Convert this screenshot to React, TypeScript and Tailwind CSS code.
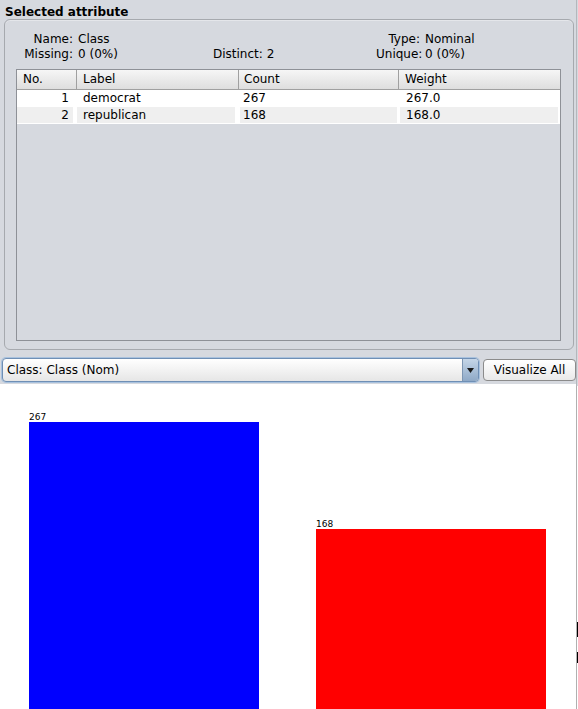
import React from "react";

const ROWS = [
  { no: 1, label: "democrat", count: "267", weight: "267.0" },
  { no: 2, label: "republican", count: "168", weight: "168.0" },
];

const BARS = [
  { value: 267, color: "bg-[#0000ff]" },
  { value: 168, color: "bg-[#ff0000]" },
];

const MAX_H = 289;

export default function App() {
  const max = Math.max(...BARS.map((b) => b.value));

  return (
    <div className="flex h-[709px] w-[578px] overflow-hidden bg-[#d6d9df] font-['DejaVu_Sans',sans-serif] text-[12px] leading-[15px] text-black">
      <div className="flex w-[576px] shrink-0 flex-col overflow-hidden">
        {/* title */}
        <div className="h-[19px] shrink-0 pl-[5px] pt-[5px] text-[12px] font-bold leading-[14px]">
          Selected attribute
        </div>

        {/* panel */}
        <div className="ml-[4px] flex h-[331px] w-[570px] shrink-0 flex-col rounded-[6px] border border-[#a6a9ae] bg-[#d6d9df] shadow-[inset_0_1px_0_#e4e6ea]">
          <div className="flex pt-[12px]">
            <div className="grid w-[190px] grid-cols-[68px_1fr] gap-x-[5px]">
              <span className="text-right">Name:</span>
              <span>Class</span>
              <span className="text-right">Missing:</span>
              <span>0 (0%)</span>
            </div>
            <div className="w-[181px] pt-[15px] pl-[18px]">Distinct: 2</div>
            <div className="grid grid-cols-[44px_1fr] gap-x-[5px]">
              <span className="text-right">Type:</span>
              <span>Nominal</span>
              <span className="text-right">Unique:</span>
              <span>0 (0%)</span>
            </div>
          </div>

          {/* table */}
          <div className="ml-[11px] mt-[7px] flex h-[272px] w-[545px] flex-col border border-[#8e9197] bg-[#d6d9df]">
            <div className="flex h-[20px] border-b border-[#a0a0a0] bg-gradient-to-b from-[#f6f6f6] to-[#dedede]">
              <div className="w-[60px] border-r border-[#a0a0a0] pl-[6px] leading-[19px]">No.</div>
              <div className="w-[162px] border-r border-[#a0a0a0] pl-[6px] leading-[19px]">Label</div>
              <div className="w-[160px] border-r border-[#a0a0a0] pl-[5px] leading-[19px]">Count</div>
              <div className="flex-1 pl-[6px] leading-[19px]">Weight</div>
            </div>
            {ROWS.map((r, i) => (
              <div
                key={r.no}
                className={
                  "flex h-[17px] bg-white leading-[16px] " + (i % 2 === 1 ? "pb-[1px]" : "")
                }
              >
                <div className={"mr-[4px] w-[56px] pr-[4px] text-right " + (i % 2 === 1 ? "bg-[#efefef]" : "")}>
                  {r.no}
                </div>
                <div className={"mr-[5px] w-[158px] pl-[6px] " + (i % 2 === 1 ? "bg-[#efefef]" : "")}>
                  {r.label}
                </div>
                <div className={"mr-[3px] w-[157px] pl-[3px] " + (i % 2 === 1 ? "bg-[#efefef]" : "")}>
                  {r.count}
                </div>
                <div className={"mr-[2px] flex-1 pl-[6px] " + (i % 2 === 1 ? "bg-[#efefef]" : "")}>
                  {r.weight}
                </div>
              </div>
            ))}
          </div>
        </div>

        {/* class selector */}
        <div className="mt-[8px] flex h-[26px] shrink-0 items-start">
          <div className="ml-[2px] flex h-[24px] w-[477px] overflow-hidden rounded-[4px] border border-[#6f8fb5] bg-gradient-to-b from-[#ffffff] to-[#e6e6e6] shadow-[0_0_0_1px_#a9c2de]">
            <div className="flex-1 pl-[4px] text-[12px] leading-[22px]">Class: Class (Nom)</div>
            <div className="flex w-[16px] items-center justify-center border-l border-[#7d96b3] bg-gradient-to-b from-[#c5d6e8] to-[#8fa9c7]">
              <svg width="7" height="5" viewBox="0 0 7 5">
                <path d="M0 0 H7 L3.5 5 Z" fill="#1a1a1a" />
              </svg>
            </div>
          </div>
          <button className="ml-[4px] mt-[1px] h-[22px] w-[93px] rounded-[4px] border border-[#8b8b8b] bg-gradient-to-b from-[#ffffff] to-[#e9e9e9] text-[12px] leading-[20px] text-black">
            Visualize All
          </button>
        </div>

        {/* chart */}
        <div className="flex h-[327px] shrink-0 items-end gap-[57px] bg-white pl-[29px]">
          {BARS.map((b) => (
            <div key={b.value} className="flex w-[230px] flex-col">
              <span className="text-[9px] leading-[9px] text-black">{b.value}</span>
              <div className={b.color} style={{ height: Math.round((b.value / max) * MAX_H) }} />
            </div>
          ))}
        </div>
      </div>

      {/* split pane edge */}
      <div className="flex w-[2px] shrink-0 flex-col">
        <div className="h-[386px] border-l border-[#b4b7bc] bg-[#d6d9df]" />
        <div className="flex flex-1 border-l border-[#b0b0b0] bg-white">
          <div className="flex w-[1px] flex-col">
            <div className="h-[236px]" />
            <div className="h-[15px] bg-black" />
            <div className="h-[15px]" />
            <div className="h-[11px] bg-black" />
          </div>
        </div>
      </div>
    </div>
  );
}
